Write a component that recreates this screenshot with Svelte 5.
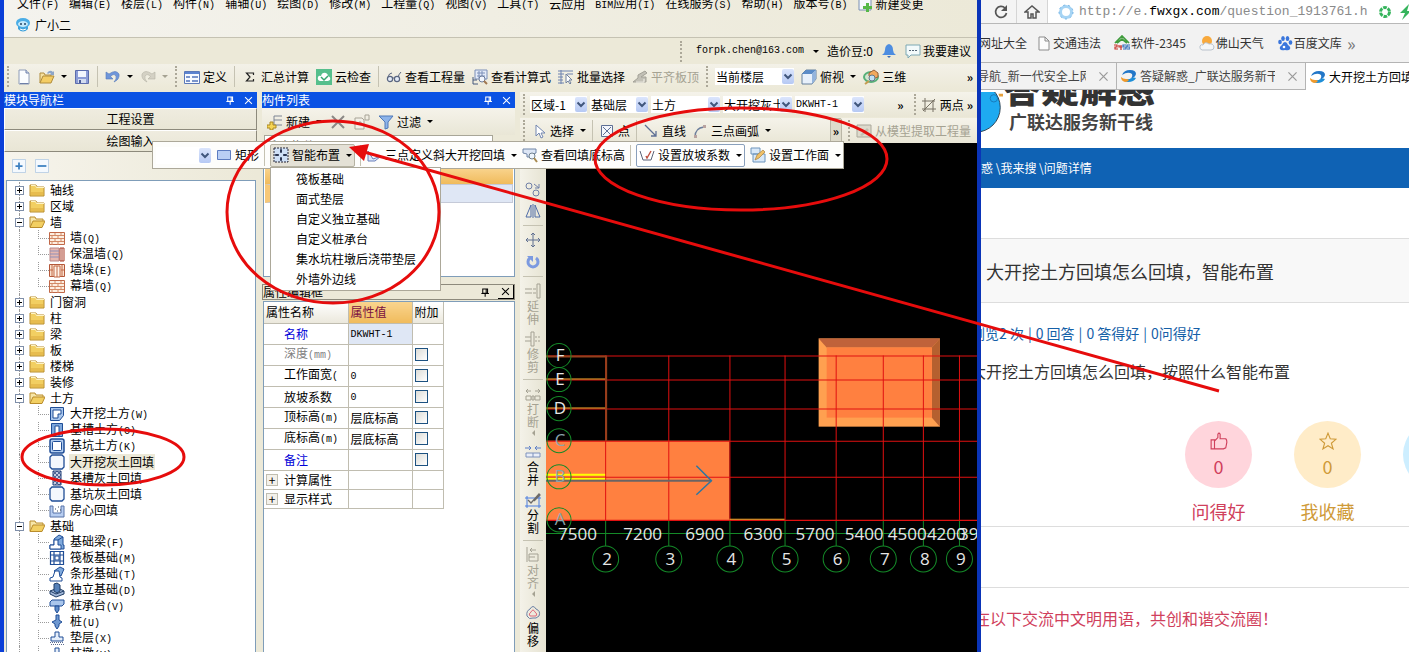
<script>
  const menus = ['文件(F)', '编辑(E)', '楼层(L)', '构件(N)', '辅轴(U)', '绘图(D)', '修改(M)', '工程量(Q)', '视图(V)', '工具(T)', '云应用', 'BIM应用(I)', '在线服务(S)', '帮助(H)', '版本号(B)'];

  const tree = [
    { label: '轴线' },
    { label: '区域' },
    {
      label: '墙',
      children: [['brick', '墙(Q)'], ['insul', '保温墙(Q)'], ['pier', '墙垛(E)'], ['brick', '幕墙(Q)']],
    },
    { label: '门窗洞' },
    { label: '柱' },
    { label: '梁' },
    { label: '板' },
    { label: '楼梯' },
    { label: '装修' },
    {
      label: '土方',
      children: [
        ['dig', '大开挖土方(W)'],
        ['trench', '基槽土方(C)'],
        ['pit', '基坑土方(K)'],
        ['fill', '大开挖灰土回填', true],
        ['hatch', '基槽灰土回填'],
        ['fill', '基坑灰土回填'],
        ['room', '房心回填'],
      ],
    },
    {
      label: '基础',
      children: [
        ['beam', '基础梁(F)'],
        ['raft', '筏板基础(M)'],
        ['strip', '条形基础(T)'],
        ['single', '独立基础(D)'],
        ['cap', '桩承台(V)'],
        ['pile', '桩(U)'],
        ['pad', '垫层(X)'],
        ['pad', '柱墩(Y)'],
      ],
    },
  ];

  const layouts = ['筏板基础', '面式垫层', '自定义独立基础', '自定义桩承台', '集水坑柱墩后浇带垫层', '外墙外边线'];

  const combos = [['区域-1', 57], ['基础层', 58], ['土方', 69], ['大开挖灰土', 69], ['DKWHT-1', 69]];

  const props = [
    { name: '名称', value: 'DKWHT-1', kind: 'key' },
    { name: '深度(mm)', value: '', kind: 'off', check: true },
    { name: '工作面宽(', value: '0', check: true },
    { name: '放坡系数', value: '0', check: true },
    { name: '顶标高(m)', value: '层底标高', check: true },
    { name: '底标高(m)', value: '层底标高', check: true },
    { name: '备注', value: '', kind: 'key', check: true },
  ];

  const edits = [
    { icon: 'copy' },
    { icon: 'mirror', sep: true },
    { icon: 'move' },
    { icon: 'rotate', sep: true },
    { icon: 'extend', label: '延伸', off: true },
    { icon: 'trim', label: '修剪', off: true, sep: true },
    { icon: 'break', label: '打断', off: true, more: true },
    { icon: 'join', label: '合并' },
    { icon: 'split', label: '分割', sep: true },
    { icon: 'align', label: '对齐', off: true, more: true },
    { icon: 'offset', label: '偏移' },
  ];

  // axis grid of the drawing
  const cols = [[59, 2], [122, 3], [183, 4], [238, 5], [289, 6], [336, 7], [376, 8], [412, 9]];
  const rows = [[212, 'F'], [236, 'E'], [265, 'D'], [297, 'C'], [333, 'B'], [376, 'A']];
  const spans = [[12, '7500'], [77, '7200'], [139, '6900'], [197, '6300'], [249, '5700'], [298, '5400'], [341, '4500'], [380, '4200'], [412, '3900']];

  const stats = ['浏览2 次', '|', '0 回答', '|', '0 答得好', '|', '0问得好'];

  const isLatin = (s) => /^[\x20-\x7e]/.test(s);

  const icons = {
    mascot: '<path d="M2 3l3 1h6l3-1-1 4v5q-5 5-10 0V7z" fill="#3fa2dc"/><ellipse cx="8" cy="6" rx="7" ry="5" fill="#4badE6"/><ellipse cx="8" cy="7" rx="5" ry="3" fill="#c3e8fa"/><circle cx="6" cy="7" r="1" fill="#246"/><circle cx="10" cy="7" r="1" fill="#246"/><path d="M5 12q3 2 6 0" fill="none" stroke="#fff"/>',
    page: '<path d="M3 1h7l3 3v11H3z" fill="#fbfdff" stroke="#8e9cb8"/><path d="M10 1v3h3" fill="#d5dff0" stroke="#6d7fa8"/><path d="M4 14.500h8.500" stroke="#6d7fa8"/>',
    open: '<path d="M1 14V4h4l1 2h6v2" fill="#f6e1a0" stroke="#b08c3c"/><path d="M1 14l3-7h11l-3 7z" fill="#f4cd64" stroke="#b08c3c"/><path d="M8 4q3-4 6-1l1-1v4h-4l1-1q-1-2-3 0z" fill="#8ea6c8"/>',
    save: '<path d="M1.500 1.500h13v13h-13z" fill="#8c9cd6" stroke="#5c6cac"/><path d="M4 2h8v6H4z" fill="#f3f6fd"/><path d="M4 10h8v4H4z" fill="#d3dcf0"/><path d="M5 11h2v3H5z" fill="#4c5c98"/>',
    undo: '<path d="M1 3v7h7L5.500 7.500Q9 4 11 7q1 3-2 6 6-3 5-8-3-5-10 0z" fill="#6f96da" stroke="#5478b8" stroke-width=".6"/>',
    redo: '<path d="M15 3v7H8l2.500-2.500Q7 4 5 7q-1 3 2 6-6-3-5-8 3-5 10 0z" fill="#d4d1c4" stroke="#b4b1a4" stroke-width=".6"/>',
    define: '<path d="M.5 2.500h15v12H.5z" fill="#f7faff" stroke="#5b79b8"/><path d="M1 3h14v2H1z" fill="#5b83d0"/><path d="M2 7h4v2H2zM2 11h4v2H2zM8 7h6v2H8zM8 11h6v2H8z" fill="#7a95cc"/>',
    sum: '<path d="M11.500 6V4h-7l3.500 4-3.500 4h7v-2" fill="none" stroke="#222" stroke-width="1.200"/>',
    cloud: '<path d="M0 0h16v16H0z" fill="#56bf8c"/><path d="M4 12q-3-1-2-4 1-2 3-1 1-4 5-3 2 1 2 3 3 1 2 4l-2 1z" fill="#fff"/><path d="M5 8l3 3 4-4" fill="none" stroke="#35a56e" stroke-width="1.500"/>',
    glasses: '<circle cx="4" cy="10" r="2.600" fill="#e5ecf8" stroke="#5a6680" stroke-width="1.200"/><circle cx="11" cy="10" r="2.600" fill="#e5ecf8" stroke="#5a6680" stroke-width="1.200"/><path d="M6 9h3M2 8q1-4 4-4M12 8q1-3 3-5" fill="none" stroke="#5a6680"/>',
    formula: '<path d="M3 1h12v9H3z" fill="#e4ebf8" stroke="#7b8fb8"/><path d="M5 4h8M5 7h8M7 2v7M10 2v7" stroke="#7b8fb8"/><path d="M1 8v7h5M1 11h4" fill="none" stroke="#44587c"/><circle cx="10" cy="10" r="3" fill="#f2f6fd" stroke="#6b7c9c"/><path d="M12 12l3 3" stroke="#a07850" stroke-width="2"/>',
    batch: '<path d="M0 2h15M0 5h6M0 8h5M0 11h5M0 14h6M3 1v14M9 5h6" stroke="#6c82b0"/><path d="M8 5v9l2-2 2 3 1-1-2-3h3z" fill="#fff" stroke="#70809c"/>',
    level: '<path d="M1 13l5-4V6l7-4 2 2-6 4h5v5z" fill="#c2c0b6" stroke="#a3a197"/><path d="M4 13h8v-3" fill="none" stroke="#f4f2ea"/>',
    cube: '<path d="M1 5l4-4h10v9l-4 5H1z" fill="#e7f0fb" stroke="#66809c"/><path d="M1 5l4-4h10l-4 4z" fill="#5b8cc8"/><path d="M11 5l4-4v9l-4 5z" fill="#94b4dc"/>',
    orbit: '<ellipse cx="8" cy="8" rx="7" ry="5" fill="#d5e4d0" stroke="#56b078" stroke-width="2"/><path d="M6 4l5-3 4 3v4l-5 2-4-3z" fill="#f2a95c" stroke="#98603c"/><circle cx="9" cy="9" r="3" fill="#bfe0f5" stroke="#678"/><path d="M6 12l-4 3" stroke="#c59c50" stroke-width="2"/>',
    add: '<path d="M7 2h8M7 6h8M7 11h8M7 2v9" stroke="#7c8494"/><path d="M3 8h3v3h3v3H6v2H3v-2H0v-3h3z" fill="#f6d553" stroke="#a98722"/>',
    del: '<path d="M2 2l12 12M14 2L2 14" stroke="#8b8986" stroke-width="2"/>',
    dup: '<path d="M1 4h7l2 2v9H1z" fill="#f2f0e8" stroke="#a7a396"/><path d="M11 1h4v5h-4zM4 9h4M6 7v4" fill="none" stroke="#a7a396"/>',
    filter: '<path d="M1 2h14l-5 6v6l-3 1V8z" fill="#8db4ea" stroke="#4f78b8"/>',
    pin: '<path d="M4 3h7v6H4zM9 3v6M2 9.500h11M7.500 10v4" fill="none" stroke="currentColor" stroke-width="1.500"/>',
    close: '<path d="M3 3l10 10M13 3L3 13" stroke="currentColor" stroke-width="1.500"/>',
    cursor: '<path d="M5 2v11l3-3 2 5 2-1-2-4h4z" fill="#fff" stroke="#7286b0"/>',
    point: '<path d="M2.500 2.500h11v11h-11z" fill="#f4f6fb" stroke="#5d6f94"/><path d="M4 4l8 8M12 4l-8 8" stroke="#5d6f94"/>',
    line: '<path d="M2 2l11 11M13 8v5H8" fill="none" stroke="#5d6f94" stroke-width="1.300"/>',
    arc: '<path d="M3 14Q3 5 12 4" fill="none" stroke="#6d7f9c" stroke-width="1.300"/><path d="M2 12h3v3H2zM11 2h3v3h-3z" fill="#b9a3a0"/>',
    twop: '<path d="M4 1v14M12 3v12M1 4h13M1 12h14M2 14L14 2" stroke="#777164"/>',
    model: '<path d="M1 2h14v12H1z" fill="#dddacc" stroke="#aaa89b"/><path d="M4 12l7-7 2 2-7 6z" fill="#c3c0b2"/>',
    rect: '<path d="M1.500 3.500h13v9h-13z" fill="#b9cff5" stroke="#5c7cc0"/>',
    smart: '<path d="M1 1h14v14H1z" fill="#cfe0f6" stroke="#223" stroke-dasharray="2 1"/><path d="M8 2v4M8 10v4M2 8h4M10 8h4M7 4h2M7 12h2M4 7v2M12 7v2" fill="none" stroke="#1a2440" stroke-width="1.300"/>',
    slope: '<path d="M2 14V4l5 8 8-3-6 5z" fill="#dce6f8" stroke="#6b80bb"/>',
    lookup: '<path d="M1 2h13v4l-3 1v3H5V7L1 6z" fill="#dde6f5" stroke="#6f85a8"/><circle cx="10" cy="9" r="3" fill="#eef5fd" stroke="#70808c"/><path d="M12 11l3 4" stroke="#a88a50" stroke-width="2"/>',
    factor: '<path d="M1 4l3 9h8l3-9" fill="none" stroke="#5a6378"/><path d="M7 9l1 2 4-7" fill="none" stroke="#c05040" stroke-width="1.400"/>',
    face: '<path d="M1 1h9v6H1zM3 7h12v8H3z" fill="#d8e8f8" stroke="#6c94bc"/><path d="M5 13l2-5 6-5 2 2-6 6z" fill="#f0c168" stroke="#a8803c" stroke-width=".7"/>',
    bell: '<path d="M8 1q4 1 4 6 0 3 3 5H1q3-2 3-5 0-5 4-6z" fill="#4d8de0"/><path d="M6 13h4l-2 2z" fill="#3a6cb8"/>',
    talk: '<path d="M1 2h14v10H6l-3 3v-3H1z" fill="#f3fafb" stroke="#7da8b4"/><path d="M4 7.500h9" stroke="#567" stroke-dasharray="2 1"/>',
    change: '<path d="M2 0h9l3 3v11H2z" fill="#f5f8fd" stroke="#7b90b4"/><path d="M9 7h3v3h3v3h-3v3H9v-3H6v-3h3z" fill="#55b848"/>',
    folder: '<path d="M1 3h6l1 2h7v9H1z" fill="#f2cf62" stroke="#b98c2c"/><path d="M2 3.500h4.500l1 2H15" fill="none" stroke="#fdf3c4"/><path d="M2 10h12v3H2z" fill="#dba93c" opacity=".5"/>',
    folderOpen: '<path d="M1 13V3h5l1 2h7v3" fill="#f7e6a8" stroke="#b98c2c"/><path d="M1 13.500l3-6.500h12l-3 6.500z" fill="#f2cf62" stroke="#b98c2c"/>',
    brick: '<path d="M.5 2.500h15v12H.5z" fill="#fdeee0" stroke="#c06848"/><path d="M1 5.500h14M1 8.500h14M1 11.500h14M6 3v3M12 3v3M3 6v3M9 6v3M6 9v3M12 9v3M3 12v3M9 12v3" stroke="#d38a66"/>',
    insul: '<path d="M1 2h9v13H1z" fill="#e7b8b0" stroke="#b88"/><path d="M1 5h9M1 8h9M1 11h9" stroke="#8f8fb8"/><path d="M11 2h4v13h-4zM13 2v13" fill="#fff" stroke="#a83c28"/>',
    pier: '<path d="M.5 2.500h15v12H.5z" fill="#fbe2d0" stroke="#b4583a"/><path d="M5 4h6v11H5zM3 3v11M8 4v11M13 3v11M1 8h3M12 8h3" fill="#fff4ea" stroke="#c26a48"/>',
    dig: '<path d="M1.500 1.500h13v8l-4 5h-9z" fill="#a9c6ec" stroke="#1f4d96"/><path d="M4 4h8v4H9v4H4z" fill="#fff" stroke="#1f4d96"/>',
    trench: '<path d="M2.500 1.500h11v13h-11z" fill="#7da7dc" stroke="#1f4d96"/><path d="M6 4h4v10H6z" fill="#fff" stroke="#1f4d96"/>',
    pit: '<rect x="1" y="1" width="14" height="14" rx="2" fill="#b2cdf0" stroke="#1f4d96" stroke-width="1.500"/><rect x="3.500" y="3.500" width="9" height="9" rx="1" fill="#fff" stroke="#1f4d96"/>',
    fill: '<path d="M3 1h10l2 2v10l-2 2H3l-2-2V3z" fill="#f3f7fd" stroke="#1f4d96" stroke-width="1.300"/>',
    hatch: '<path d="M4 1h8v14H4z" fill="#c4cbe0" stroke="#1f3d76"/><path d="M4 5l4-4M4 9l8-8M4 13l8-8M6 15l6-6M10 15l2-2M8 1l4 4M4 1l8 8M4 5l8 8M4 9l6 6" stroke="#1f3d76" stroke-width=".7"/>',
    room: '<path d="M1 4h3v7h8V4h3v11H1z" fill="#b7cdf0" stroke="#5673a8"/><path d="M6 7h1M9 5h1M8 9h1M11 8h1" stroke="#345"/>',
    beam: '<path d="M1 15v-4h4V5l5-4 4 2v8h1v4z" fill="#7fa9dc" stroke="#1f4d96"/><path d="M1 15v-4h4V6h4v5h3v4z" fill="#fff" stroke="#1f4d96"/><path d="M9 6l5-3" fill="none" stroke="#1f4d96"/>',
    raft: '<path d="M1.500 1.500h13v13h-13zM1 5h14M1 11h14M5 1v14M11 1v14" fill="#fff" stroke="#1f4d96" stroke-width="1.200"/><path d="M6 6h4v4H6z" fill="#fff" stroke="#1f4d96"/>',
    strip: '<path d="M5 5l6-4 4 2-3 7z" fill="#7fa9dc" stroke="#1f4d96"/><path d="M1 15v-3l3-1 2-6h4l1 6 2 1v3z" fill="#fff" stroke="#1f4d96"/>',
    single: '<path d="M1 9l8-3 6 3v3l-8 3-6-3z" fill="#a3b8d8" stroke="#1f3d66"/><path d="M5 2l3-1 3 2v6l-3 2-3-2z" fill="#5580b8" stroke="#1f3d66"/><path d="M1 9l6 3 8-3" fill="none" stroke="#1f3d66"/>',
    cap: '<path d="M1 4l2-2h12v4l-2 2H1z" fill="#a9c6ec" stroke="#1f4d96"/><path d="M6 8h4v4l-2 3-2-3z" fill="#5f8cc8" stroke="#1f4d96"/>',
    pile: '<path d="M7 1h3v5l3 2-3 2v2l-2 3-2-3v-2L3 8l4-2z" fill="#6f98d0" stroke="#1f4d96"/>',
    pad: '<path d="M6 2h4v5h4v4H2V7h4z" fill="#e5eefa" stroke="#1f4d96"/><path d="M1 12.500h14M2 14.500h13" stroke="#5c6c90" stroke-dasharray="1 1"/>',
    copy: '<circle cx="4" cy="5" r="3" fill="none" stroke="#7080a8"/><circle cx="11" cy="12" r="3" fill="none" stroke="#7080a8"/><path d="M9 3l5 4M14 3v4h-4" fill="none" stroke="#7080a8"/>',
    mirror: '<path d="M6 2v12H1zM10 2v12h5zM8 1v14" fill="none" stroke="#4f6ca8"/>',
    move: '<path d="M8 1v14M1 8h14M6 3l2-2 2 2M6 13l2 2 2-2M3 6L1 8l2 2M13 6l2 2-2 2" fill="none" stroke="#5f6f90"/>',
    rotate: '<path d="M5 4a5 5 0 1 0 6 0" fill="none" stroke="#7c9ae0" stroke-width="3"/><path d="M2 2h6v6z" fill="#7c9ae0"/>',
    extend: '<path d="M0 6h7M0 10h7M8 6h3M8 10h3" stroke="#a4a193"/><path d="M12 1h3v14h-3z" fill="none" stroke="#a4a193"/>',
    trim: '<path d="M6 1h3v14H6zM0 6h6M0 10h6M10 6h2M13 6h2M10 10h2M13 10h2" fill="none" stroke="#a4a193"/>',
    break: '<path d="M1 5h5M10 5h5M3 3L1 5l2 2M13 3l2 2-2 2M1 10h5v4H1zM7 10h2v4H7zM10 10h5v4h-5z" fill="none" stroke="#a4a193"/>',
    join: '<path d="M0 4h6M10 4h6M4 2l2 2-2 2M12 2l-2 2 2 2" fill="none" stroke="#5c7fc8"/><path d="M1 9h14v4H1zM8 9v4" fill="#e9eef8" stroke="#7f92bc"/>',
    split: '<path d="M0 6h16M0 14h16M2 4v12M14 4v12" stroke="#4b7ce0"/><path d="M3 8l3 3 8-9 1 1-6 6" fill="none" stroke="#6c6a68" stroke-width="1.300"/>',
    align: '<path d="M2 0v15M5 3h6M5 3l2-2M5 3l2 2M4 7h9v7H4zM4 10h6" fill="none" stroke="#a4a193"/>',
    offset: '<path d="M5 4q3-5 6 0 5 2 3 7-3 3-6 2-4 2-6-2-1-5 3-7z" fill="none" stroke="#6c80a4"/><path d="M6 7q2-4 4 0 3 2 1 4H5q-2-2 1-4z" fill="none" stroke="#e06a7a"/>',
    plus: '<path d="M.5.5h15v15H.5z" fill="#f4f9fe" stroke="#b5cbe4"/><path d="M8 4v8M4 8h8" stroke="#3b7fc0" stroke-width="2"/>',
    minus: '<path d="M.5.5h15v15H.5z" fill="#f4f9fe" stroke="#b5cbe4"/><path d="M3 8h10" stroke="#3b7fc0" stroke-width="2"/>',
    reload: '<path d="M12 4a5.500 5.500 0 1 0 1.500 5" fill="none" stroke="#555" stroke-width="1.700"/><path d="M14 1v6H8z" fill="#555"/>',
    home: '<path d="M1 8l7-6 7 6h-3v6H9v-4H7v4H4V8z" fill="none" stroke="#555" stroke-width="1.500"/>',
    site: '<circle cx="8" cy="8" r="5.500" fill="none" stroke="#a6d4f4" stroke-width="3"/><circle cx="8" cy="8" r="7" fill="none" stroke="#6fb2e6" stroke-dasharray="2 3"/>',
    aperture: '<circle cx="8" cy="8" r="4.500" fill="none" stroke="#35b45c" stroke-width="3" stroke-dasharray="3.700 1"/>',
    bolt: '<path d="M11 0L2 9h5l-3 7 9-9H9z" fill="#35b45c"/>',
    file: '<path d="M3 2h6l4 4v9H3zM9 2v4h4" fill="#fcfcfc" stroke="#8c8c8c"/>',
    house: '<path d="M1 8l7-7 7 7M3 8V6M13 8l-5-4-5 4" fill="none" stroke="#3f9c3c" stroke-width="1.700"/><path d="M0 10h3v2H1v2h3M5 10v2h3M7 10v5" fill="none" stroke="#c8342c" stroke-width="1.200"/><path d="M12 10H9v2h3v2H9M16 10h-3v2h3v2h-3" fill="none" stroke="#2f6cb8" stroke-width="1.200"/>',
    weather: '<circle cx="8" cy="6" r="5" fill="#f8a93c"/><path d="M3 15q-3-1-2-4 1-2 3-1 2-4 6-1 4-1 5 3 0 3-3 3z" fill="#f4f6f8" stroke="#b9c2cc"/>',
    paw: '<ellipse cx="3" cy="7" rx="1.800" ry="2.300" fill="#3a76dc"/><ellipse cx="6" cy="3.500" rx="1.800" ry="2.500" fill="#3a76dc"/><ellipse cx="10.500" cy="3.500" rx="1.800" ry="2.500" fill="#3a76dc"/><ellipse cx="13.500" cy="7.500" rx="1.800" ry="2.300" fill="#3a76dc"/><path d="M8 7q2 0 3 3 3 2 2 4-1 2-5 1-4 1-5-1-1-2 2-4 1-3 3-3z" fill="#3a76dc"/><circle cx="7" cy="12" r="1.300" fill="#fff"/>',
    swirl: '<path d="M1 7Q3 2 9 2q6 0 6 4-1 4-6 5 3-2 2-5Q7 3 1 7z" fill="#2377c8"/><path d="M15 10q-2 4-8 4-4 0-5-3 6 1 9-1 2-1 4 0z" fill="#1f8fd8"/><path d="M0 9q2 2 5 2 2 0 3 1-1 2-4 2-4-1-4-5z" fill="#f09a2c"/>',
    thumb: '<path d="M1 7h3v8H1zM4 8l3-3V2q1-2 2 0v4h5q1 1 1 3l-1 5-2 1H4" fill="none" stroke="currentColor"/>',
    star: '<path d="M8 1l2 5 5 .5-4 3.500 1.500 5L8 12.200 3.500 15 5 10 1 6.500 6 6z" fill="none" stroke="currentColor"/>',
  };
</script>

{#snippet icon(name)}
  <svg class="icon" viewBox="0 0 16 16" aria-hidden="true">{@html icons[name]}</svg>
{/snippet}

{#snippet text(s)}
  {#each s.split(/([\x20-\x7e]+)/).filter(Boolean) as part}{#if isLatin(part)}<span class="latin">{part}</span>{:else}{part}{/if}{/each}
{/snippet}

{#snippet tool(name, label, more = false, off = false)}
  <button type="button" class="tool" class:off>
    {@render icon(name)}
    {#if label}<span>{label}</span>{/if}
    {#if more}<i class="caret"></i>{/if}
  </button>
{/snippet}

{#snippet combo(value, label)}
  <span class="combo">
    <select aria-label={label} class:latin={isLatin(value)}><option>{value}</option></select>
    <svg class="arrow" viewBox="0 0 12 15" aria-hidden="true"><path d="M2.500 5.500L6 9l3.500-3.500" /></svg>
  </span>
{/snippet}

<div class="desktop">
  <section class="cad">
    <header>
      <nav class="menubar">
        <div class="menus">
          {#each menus as m}
            <button type="button">{@render text(m)}</button>
          {/each}
          <button type="button" class="with-icon">{@render icon('change')}新建变更</button>
        </div>
        <button type="button" class="with-icon helper">{@render icon('mascot')}广小二</button>
      </nav>

      <div class="account">
        <i class="grip"></i>
        <button type="button" class="mail">{@render text('forpk.chen@163.com')}<i class="caret"></i></button>
        <span>造价豆:0</span>
        <button type="button" class="with-icon" aria-label="消息">{@render icon('bell')}</button>
        <button type="button" class="with-icon">{@render icon('talk')}我要建议</button>
      </div>

      <div class="toolbar main-tools">
        <i class="grip"></i>
        {@render tool('page')}
        {@render tool('open', '', true)}
        {@render tool('save')}
        <i class="sep"></i>
        {@render tool('undo', '', true)}
        {@render tool('redo', '', true, true)}
        <i class="grip"></i>
        {@render tool('define', '定义')}
        <i class="sep"></i>
        {@render tool('sum', '汇总计算')}
        {@render tool('cloud', '云检查')}
        <i class="sep"></i>
        {@render tool('glasses', '查看工程量')}
        {@render tool('formula', '查看计算式')}
        {@render tool('batch', '批量选择')}
        {@render tool('level', '平齐板顶', false, true)}
        <i class="grip"></i>
        <div class="floor">{@render combo('当前楼层', '楼层范围')}</div>
        {@render tool('cube', '俯视', true)}
        {@render tool('orbit', '三维')}
        <span class="overflow">»</span>
      </div>
    </header>

    <div class="work">
      <aside class="nav">
        <h2 class="title">模块导航栏 <span class="title-icons">{@render icon('pin')}{@render icon('close')}</span></h2>
        <button type="button" class="section">工程设置</button>
        <button type="button" class="section">绘图输入</button>
        <div class="expand">
          <button type="button" aria-label="展开">{@render icon('plus')}</button>
          <button type="button" aria-label="折叠">{@render icon('minus')}</button>
        </div>
        <ul class="tree">
          {#each tree as node}
            <li>
              <div class="node">
                <span class="toggle" class:open={node.children}></span>
                {@render icon(node.children ? 'folderOpen' : 'folder')}
                <span>{node.label}</span>
              </div>
              {#if node.children}
                <ul>
                  {#each node.children as [name, label, selected]}
                    <li class="leaf">
                      {@render icon(name)}
                      <span class="leaf-label" class:selected>{@render text(label)}</span>
                    </li>
                  {/each}
                </ul>
              {/if}
            </li>
          {/each}
        </ul>
      </aside>

      <aside class="parts">
        <h2 class="title">构件列表 <span class="title-icons">{@render icon('pin')}{@render icon('close')}</span></h2>
        <div class="toolbar list-tools">
          {@render tool('add', '新建', true)}
          {@render tool('del')}
          {@render tool('dup')}
          {@render tool('filter', '过滤', true)}
        </div>
        <input class="search" type="text" placeholder="搜索构件..." aria-label="搜索构件" />
        <div class="list">
          <div class="list-head"></div>
          <div class="list-row"></div>
        </div>
        <h2 class="prop-title">属性编辑框 <span class="title-icons">{@render icon('pin')}<button type="button" aria-label="关闭">{@render icon('close')}</button></span></h2>
        <div class="props">
          <table>
            <thead>
              <tr><th class="c-name">属性名称</th><th class="c-value">属性值</th><th class="c-check">附加</th></tr>
            </thead>
            <tbody>
              {#each props as p, i}
                <tr>
                  <td class="name {p.kind ?? ''}">{@render text(p.name)}</td>
                  <td class:current={i === 0}>{@render text(p.value)}</td>
                  <td class="check">{#if p.check}<input type="checkbox" aria-label={p.name} />{/if}</td>
                </tr>
              {/each}
              {#each ['计算属性', '显示样式'] as g}
                <tr class="group">
                  <td><span class="group-label"><span class="box">+</span>{g}</span></td>
                  <td></td>
                  <td></td>
                </tr>
              {/each}
            </tbody>
          </table>
        </div>
      </aside>

      <main class="drawing">
        <div class="toolbar pick-tools">
          <i class="grip"></i>
          {#each combos as [value, width]}
            <div style="width: {width}px">{@render combo(value, value)}</div>
          {/each}
          <span class="overflow">»</span>
          <i class="grip"></i>
          {@render tool('twop', '两点')}
          <b>»</b>
        </div>
        <div class="toolbar draw-tools">
          <i class="grip"></i>
          {@render tool('cursor', '选择', true)}
          <i class="sep"></i>
          {@render tool('point', '点')}
          <i class="sep"></i>
          {@render tool('line', '直线')}
          {@render tool('arc', '三点画弧', true)}
          <button type="button" class="expander overflow">»</button>
          <i class="grip"></i>
          {@render tool('model', '从模型提取工程量', false, true)}
        </div>
        <div class="stage">
          <div class="edits">
            {#each edits as e}
              <button type="button" class="edit" class:off={e.off}>
                {@render icon(e.icon)}
                {#if e.label}<span>{e.label}</span>{/if}
                {#if e.more}<i class="caret-left"></i>{/if}
              </button>
              {#if e.sep}<i class="rule"></i>{/if}
            {/each}
          </div>
          <svg class="canvas" viewBox="0 0 430 509" preserveAspectRatio="xMinYMin slice">
            <rect x="0" y="297" width="183" height="80" fill="#ff8040" />
            <!-- backfill pit with bevelled edges -->
            <rect x="272" y="195" width="121" height="88" fill="#ffa050" />
            <path d="M272 195h121l-8 9H280z" fill="#c0623a" />
            <path d="M385 204l8-9v88l-8-9z" fill="#b5602f" />
            <rect x="280" y="204" width="105" height="70" fill="#ff8040" />
            <g class="axis">
              {#each rows as [y]}
                <path d="M0 {y + 0.5}H430" />
              {/each}
              {#each cols as [x]}
                <path d="M{x + 0.5} 212V377" />
              {/each}
            </g>
            <path d="M0 213H60V297" fill="none" stroke="#94401c" stroke-width="2" />
            <path d="M0 235.500H59M0 264.500H59M183 375.500H238" stroke="#ffb030" />
            <path d="M0 331H59M0 335H59" stroke="#ffff00" stroke-width="2" />
            <path d="M0 337H165" fill="none" stroke="#6a6464" stroke-width="2" />
            <path d="M150 322l15 15-15 14" fill="none" stroke="#2f76a0" stroke-width="1.500" />
            <g class="bubble">
              <path d="M0 389.500H430" />
              {#each cols as [x]}
                <path d="M{x + 0.5} 377V402" />
                <circle cx={x + 0.5} cy="415" r="13" />
              {/each}
              {#each rows as [y]}
                <circle cx="13" cy={y} r="12" />
              {/each}
            </g>
            {#each cols as [x, n]}
              <text x={x + 2} y="421" text-anchor="middle">{n}</text>
            {/each}
            {#each rows as [y, n]}
              <text x="14" y={y + 5} text-anchor="middle" class:under={y > 290}>{n}</text>
            {/each}
            {#each spans as [x, n]}
              <text {x} y="396">{n}</text>
            {/each}
          </svg>
        </div>
      </main>
    </div>

    <div class="floating">
      <div class="shape">{@render combo('', '图元')}</div>
      {@render tool('rect', '矩形')}
      <i class="sep"></i>
      <div class="smart">
        {@render tool('smart', '智能布置', true)}
        <ul class="dropdown">
          {#each layouts as l}
            <li><button type="button">{l}</button></li>
          {/each}
        </ul>
      </div>
      <i class="sep"></i>
      {@render tool('slope', '三点定义斜大开挖回填', true)}
      {@render tool('lookup', '查看回填底标高')}
      <i class="sep"></i>
      <div class="framed">{@render tool('factor', '设置放坡系数', true)}</div>
      {@render tool('face', '设置工作面', true)}
    </div>
  </section>

  <section class="browser">
    <div class="address">
      <button type="button" aria-label="刷新">{@render icon('reload')}</button>
      <button type="button" aria-label="主页">{@render icon('home')}</button>
      <div class="url">
        {@render icon('site')}
        <span>http://e.<b>fwxgx.com</b>/question_1913761.h</span>
        {@render icon('aperture')}
        {@render icon('bolt')}
      </div>
    </div>
    <div class="bookmarks">
      <a href="#daquan">网址大全</a>
      <a href="#jiaotong">{@render icon('file')}交通违法</a>
      <a href="#soft">{@render icon('house')}软件-2345</a>
      <a href="#weather">{@render icon('weather')}佛山天气</a>
      <a href="#wenku">{@render icon('paw')}百度文库</a>
      <span class="more">»</span>
    </div>
    <div class="tabs">
      <div class="tab first"><span>导航_新一代安全上网导</span>{@render icon('close')}</div>
      <div class="tab second">{@render icon('swirl')}<span>答疑解惑_广联达服务新干</span>{@render icon('close')}</div>
      <div class="tab active">{@render icon('swirl')}<span>大开挖土方回填</span></div>
    </div>
    <div class="page">
      <div class="brand">
        <svg class="globe" viewBox="0 0 24 42" aria-hidden="true">
          <circle cx="-6" cy="15" r="27" fill="#1eaaf1" stroke="#2b3c4c" />
          <circle cx="14" cy="5" r="4" fill="none" stroke="#1878b8" />
          <path d="M19 0h5v3h-4z" fill="#e8a13c" />
        </svg>
        <div class="brand-text">
          <strong>答疑解惑</strong>
          <span>广联达服务新干线</span>
        </div>
      </div>
      <div class="crumbs"><span>惑 \我来搜 \问题详情</span></div>
      <h1>大开挖土方回填怎么回填，智能布置</h1>
      <p class="meta">
        {#each stats as s}
          <span>{s}</span>
        {/each}
      </p>
      <p class="question">大开挖土方回填怎么回填，按照什么智能布置</p>
      <div class="votes">
        <button type="button" class="vote pink"><span class="disc">{@render icon('thumb')}0</span>问得好</button>
        <button type="button" class="vote gold"><span class="disc">{@render icon('star')}0</span>我收藏</button>
        <button type="button" class="vote blue" aria-label="分享"><span class="disc"></span></button>
      </div>
      <p class="notice">在以下交流中文明用语，共创和谐交流圈！</p>
    </div>
  </section>

  <!-- red pen marks over both windows -->
  <svg class="marks" width="1409" height="652" viewBox="0 0 1409 652" aria-hidden="true">
    <ellipse cx="333" cy="212" rx="106" ry="91" />
    <ellipse cx="741" cy="159" rx="146" ry="51" />
    <ellipse cx="103" cy="457" rx="81" ry="28" />
    <path d="M1219 391L364 152" />
    <path class="head" d="M349 147l20-3-5 17z" />
  </svg>
</div>

<style>
  :global(body) {
    margin: 0;
    overflow: hidden;
  }

  .desktop {
    position: relative;
    display: flex;
    height: 100vh;
    overflow: hidden;
    font: 12px/16px "Noto Sans CJK SC", sans-serif;
    color: #000;
  }

  .desktop :global(*) {
    box-sizing: border-box;
  }

  button,
  select,
  input {
    font: inherit;
    color: inherit;
  }

  button {
    padding: 0;
    border: 0;
    background: none;
    white-space: nowrap;
  }

  ul,
  h1,
  h2,
  p {
    margin: 0;
    padding: 0;
    list-style: none;
    font-weight: normal;
  }

  .icon {
    flex: none;
    width: 16px;
    height: 16px;
    display: block;
  }

  .latin {
    font-family: "Liberation Mono", monospace;
    font-size: 10px;
  }

  .caret {
    width: 0;
    border: 3px solid transparent;
    border-top-color: currentColor;
    border-bottom: 0;
    margin-left: 3px;
  }

  .grip {
    flex: none;
    height: 21px;
    border-left: 2px dotted #aca899;
    margin: 0 2px 0 3px;
  }

  .sep {
    flex: none;
    width: 1px;
    height: 21px;
    background: #c5c2b2;
  }

  /* CAD window */
  .cad {
    position: relative;
    flex: 973 1 0;
    min-width: 0;
    display: flex;
    flex-direction: column;
    border: 4px solid #0a3fd8;
    border-width: 0 4px;
    border-right-color: #0a34b8;
    background: #ece9d8;
  }

  .menubar {
    margin-top: -4px;
    padding: 0 0 4px 13px;
    border-bottom: 1px solid #c5c2b2;
    background: linear-gradient(90deg, #f4f3ee, #ece9d8);
  }

  .menus {
    display: flex;
    align-items: center;
    gap: 10px;
    height: 16px;
  }

  .with-icon {
    display: flex;
    align-items: center;
    gap: 2px;
    height: 16px;
  }

  .helper {
    margin: 5px 0 0 -2px;
    gap: 4px;
  }

  .account {
    display: flex;
    align-items: center;
    justify-content: flex-end;
    gap: 8px;
    height: 26px;
    padding-right: 6px;
  }

  .mail {
    display: flex;
    align-items: center;
    gap: 6px;
    padding-left: 4px;
  }

  .toolbar {
    display: flex;
    align-items: center;
    gap: 8px;
    height: 25px;
    overflow: hidden;
    white-space: nowrap;
    background: linear-gradient(#f5f3ea, #e9e6d6);
  }

  .main-tools {
    gap: 7px;
    margin-bottom: 3px;
    background: linear-gradient(#f3f1e8, #ece9d8);
  }

  .main-tools .grip {
    margin: 0;
  }

  .main-tools .grip:first-child {
    margin-left: 3px;
  }

  .tool {
    flex: none;
    display: flex;
    align-items: center;
    gap: 3px;
    color: #000;
  }

  .off {
    color: #a5a292;
  }

  .floor {
    width: 79px;
  }

  .overflow {
    margin-left: auto;
    margin-right: 4px;
    font-weight: bold;
  }

  .combo {
    display: flex;
    align-items: center;
    height: 17px;
    background: #fff;
  }

  .combo select {
    flex: 1;
    min-width: 0;
    height: 17px;
    padding: 0 0 0 1px;
    border: 0;
    background: none;
    appearance: none;
    overflow: hidden;
    line-height: 17px;
    text-overflow: clip;
  }

  .combo .latin {
    font-family: "Liberation Mono", monospace;
    font-size: 10px;
  }

  .arrow {
    flex: none;
    width: 12px;
    height: 15px;
    border-radius: 2px;
    background: linear-gradient(#dbe5fc, #b6c9f4);
  }

  .arrow path {
    fill: none;
    stroke: #40567c;
    stroke-width: 2;
  }

  .work {
    flex: 1;
    min-height: 0;
    display: flex;
    gap: 5px;
  }

  .nav,
  .parts {
    flex: 0 0 253px;
    display: flex;
    flex-direction: column;
    min-height: 0;
  }

  .title {
    flex: none;
    display: flex;
    justify-content: space-between;
    align-items: center;
    height: 16px;
    font-size: 12px;
    line-height: 16px;
    color: #fff;
    background: #0a52e4;
  }

  .title-icons {
    display: flex;
    align-items: center;
    gap: 7px;
    padding-right: 3px;
  }

  .title-icons .icon {
    width: 11px;
    height: 11px;
  }

  .section {
    flex: none;
    height: 22px;
    border: 1px solid;
    border-color: #fff #8d8a7c #8d8a7c #fff;
    background: linear-gradient(#efecdf, #e9e6d5);
  }

  .expand {
    flex: none;
    display: flex;
    align-items: center;
    gap: 9px;
    height: 28px;
    padding-left: 8px;
    background: linear-gradient(90deg, #f6f4ec, #ece9d8);
  }

  .expand .icon {
    width: 14px;
    height: 14px;
  }

  .tree {
    flex: 1;
    margin: 0 1px 0 2px;
    padding-top: 1px;
    min-height: 0;
    overflow: hidden;
    border: 1px solid #7f9db9;
    border-bottom: 0;
    background: #fff;
  }

  .node,
  .leaf {
    position: relative;
    display: flex;
    align-items: center;
    gap: 5px;
    height: 16px;
    padding-left: 8px;
  }

  .leaf {
    padding-left: 42px;
    gap: 4px;
  }

  .node::before,
  .leaf::before {
    content: "";
    position: absolute;
    left: 12px;
    top: 0;
    height: 16px;
    border-left: 1px dotted #9a9a9a;
  }

  .leaf::after {
    content: "";
    position: absolute;
    left: 31px;
    top: 0;
    width: 10px;
    height: 8px;
    border: 1px dotted #9a9a9a;
    border-width: 0 0 1px 1px;
  }

  .toggle {
    position: relative;
    flex: none;
    width: 9px;
    height: 9px;
    border: 1px solid #7f8fa9;
    background:
      linear-gradient(#000, #000) center / 5px 1px no-repeat,
      linear-gradient(#000, #000) center / 1px 5px no-repeat,
      #fff;
  }

  .toggle.open {
    background: linear-gradient(#000, #000) center / 5px 1px no-repeat, #fff;
  }

  .leaf-label {
    white-space: nowrap;
    padding: 0 1px;
  }

  .selected {
    background: #ece9d8;
  }

  .list-tools {
    flex: none;
    height: 27px;
    padding-left: 5px;
  }

  .search {
    flex: none;
    width: 229px;
    height: 20px;
    margin: 0 0 12px 2px;
    padding: 0 2px;
    border: 1px solid #a8a698;
    background: #fff;
  }

  .list {
    flex: none;
    height: 110px;
    margin-left: 1px;
    padding: 0 1px;
    border: 1px solid #7f9db9;
    background: #fff;
  }

  .list-head {
    height: 16px;
    background: linear-gradient(#f9d48e, #f0bb5c);
  }

  .list-row {
    height: 19px;
    border: 1px solid #c5cad8;
    border-left: 5px solid #f7c877;
    background: #dfe7f5;
  }

  .prop-title {
    flex: none;
    display: flex;
    justify-content: space-between;
    align-items: center;
    height: 16px;
    margin: 7px 0 1px;
    border: 1px solid #8d8a7c;
    font-size: 12px;
    line-height: 14px;
  }

  .prop-title .title-icons {
    padding: 0;
  }

  .prop-title button {
    display: grid;
    place-items: center;
    width: 16px;
    height: 14px;
    border: 1px solid #000;
    border-width: 0 1px 1px 0;
  }

  .props {
    flex: 1;
    min-height: 0;
    margin-left: 1px;
    border: 1px solid #7f9db9;
    border-bottom: 0;
    background: #fff;
  }

  table {
    border-collapse: collapse;
    table-layout: fixed;
    width: 179px;
    line-height: 16px;
  }

  th,
  td {
    height: 21px;
    padding: 0 2px;
    border: 1px solid #c0bdb0;
    border-width: 0 1px 1px 0;
    font-weight: normal;
    text-align: left;
    white-space: nowrap;
    overflow: hidden;
  }

  th {
    background: linear-gradient(#fff, #ebe8dc);
  }

  .c-name {
    width: 84px;
  }

  .c-value {
    width: 64px;
    color: #7a1040;
    background: linear-gradient(#f9d48e, #f0bb5c);
  }

  .c-check {
    width: 31px;
  }

  .name {
    padding-left: 20px;
  }

  .key {
    color: #0000d8;
  }

  .name.off {
    color: #808080;
  }

  .current {
    background: #dfe7f5;
  }

  .check input {
    display: block;
    width: 13px;
    height: 13px;
    margin: 0;
    border: 1px solid #1c5180;
    background: linear-gradient(135deg, #dcdcd7, #fff);
    appearance: none;
  }

  .group td {
    height: 19px;
  }

  .group-label {
    display: flex;
    align-items: center;
    gap: 6px;
  }

  .box {
    width: 12px;
    height: 12px;
    border: 1px solid #c0bdb0;
    background: #f3f1ea;
    line-height: 9px;
    text-align: center;
  }

  .drawing {
    flex: 1;
    min-width: 0;
    display: flex;
    flex-direction: column;
  }

  .pick-tools {
    gap: 3px;
    flex: none;
    margin-bottom: 1px;
    padding-right: 4px;
  }

  .draw-tools {
    flex: none;
    gap: 6px;
    padding-right: 6px;
  }

  .draw-tools .grip {
    margin-right: 0;
  }

  .expander {
    align-self: stretch;
    width: 12px;
    margin-right: -3px;
    border: 1px solid #b9b6a6;
    border-radius: 2px;
    background: #dedbcb;
  }

  .stage {
    flex: 1;
    min-height: 0;
    display: flex;
  }

  .edits {
    flex: 0 0 26px;
    display: flex;
    flex-direction: column;
    align-items: center;
    gap: 6px;
    padding-top: 38px;
    overflow: hidden;
    background: linear-gradient(90deg, #f4f2e9, #e6e3d2);
  }

  .edit {
    flex: none;
    display: flex;
    flex-direction: column;
    align-items: center;
  }

  .edit span {
    width: 12px;
    line-height: 13px;
    white-space: normal;
  }

  .caret-left {
    margin: 2px;
    border: 3px solid transparent;
    border-right-color: currentColor;
    border-left: 0;
  }

  .rule {
    flex: none;
    width: 20px;
    height: 1px;
    background: #c5c2b2;
  }

  .canvas {
    flex: 1;
    min-width: 0;
    height: 100%;
    background: #000;
  }

  .axis path {
    stroke: #e01010;
  }

  .bubble {
    fill: none;
    stroke: #148a28;
  }

  .canvas text {
    fill: #e6e6e6;
    font: 17px "Open Sans", sans-serif;
  }

  .canvas .under {
    fill: #8aa4ac;
  }

  .floating {
    position: absolute;
    left: 148px;
    top: 141px;
    display: flex;
    align-items: center;
    gap: 5px;
    height: 28px;
    padding: 0 2px 0 3px;
    border: 1px solid #aca899;
    background: #fdfdfb;
  }

  .shape {
    width: 55px;
  }

  .smart {
    position: relative;
  }

  .smart :global(> .tool),
  .framed :global(> .tool) {
    height: 23px;
    padding: 0 2px;
    border: 1px solid #b5b2a2;
    border-radius: 2px;
    background: #e4e1d6;
  }

  .framed :global(> .tool) {
    border-color: #8aa0bc;
    background: #fff;
  }

  .dropdown {
    position: absolute;
    left: 0;
    top: 100%;
    width: 171px;
    padding: 1px 0;
    border: 1px solid #aca899;
    background: #fff;
  }

  .dropdown button {
    display: block;
    width: 100%;
    height: 20px;
    padding-left: 25px;
    text-align: left;
  }

  /* browser window */
  .browser {
    flex: 428 1 0;
    min-width: 0;
    overflow: hidden;
    background: #fff;
  }

  .address {
    display: flex;
    height: 24px;
    border-bottom: 1px solid #b8b8b8;
    background: #f4f4f4;
  }

  .address > button {
    display: grid;
    place-items: center;
    width: 31px;
    border-right: 1px solid #d5d5d5;
  }

  .address > button:first-child {
    width: 36px;
    padding-left: 5px;
  }

  .url {
    flex: 1;
    min-width: 0;
    display: flex;
    align-items: center;
    gap: 5px;
    overflow: hidden;
    padding-left: 10px;
    background: #fff;
    font: 13px/20px "Liberation Mono", monospace;
    color: #8a8a8a;
  }

  .url span {
    margin-right: 4px;
  }

  .url b {
    font-weight: normal;
    color: #000;
  }

  .bookmarks {
    display: flex;
    align-items: center;
    gap: 9px;
    height: 38px;
    white-space: nowrap;
    background: #f2f2f2;
  }

  .bookmarks a {
    display: flex;
    align-items: center;
    gap: 1px;
    color: #333;
    text-decoration: none;
  }

  .bookmarks a:nth-child(n + 3) {
    margin-left: 4px;
  }

  .bookmarks a:first-child {
    margin-left: -2px;
  }

  .more {
    margin-left: -4px;
    font-size: 18px;
    color: #777;
  }

  .tabs {
    display: flex;
    height: 28px;
    overflow: hidden;
    background: #e6e6e6;
  }

  .tab {
    flex: none;
    display: flex;
    align-items: center;
    gap: 3px;
    padding: 0 4px;
    border: 1px solid #b4b4b4;
    border-left: 0;
    background: #f2f2f2;
    color: #444;
    white-space: nowrap;
  }

  .tab span {
    flex: 1;
    overflow: hidden;
  }

  .first {
    width: 136px;
    padding-left: 0;
    text-indent: -4px;
  }

  .second {
    width: 189px;
  }

  .first .icon:last-child,
  .second .icon:last-child {
    width: 13px;
    height: 13px;
    margin: 0 2px 0 8px;
    color: #999;
  }

  .active {
    flex: 1;
    border-bottom: 0;
    background: #fff;
    color: #000;
  }

  .brand {
    display: flex;
    height: 58px;
    overflow: hidden;
  }

  .globe {
    flex: none;
    width: 22px;
    height: 42px;
    margin-top: 2px;
  }

  .brand-text {
    display: flex;
    flex-direction: column;
    gap: 7px;
    margin-top: -23px;
    color: #333;
    font-weight: bold;
    white-space: nowrap;
  }

  .brand-text strong {
    font-size: 38px;
    line-height: 38px;
  }

  .brand-text span {
    padding-left: 6px;
    font-size: 18px;
    line-height: 18px;
    color: #444;
  }

  .crumbs {
    display: flex;
    align-items: center;
    height: 40px;
    background: #0f62b4;
    color: #fff;
  }

  h1 {
    margin-top: 50px;
    padding: 20px 5px 19px;
    border: 1px solid #ddd;
    border-width: 1px 0;
    background: #f8f8f8;
    font-size: 18px;
    line-height: 24px;
    color: #333;
    white-space: nowrap;
  }

  .meta {
    display: flex;
    gap: 4px;
    margin: 20px 0 0 -10px;
    font-size: 14px;
    line-height: 20px;
    color: #1560a8;
    white-space: nowrap;
  }

  .question {
    margin: 16px 0 0 -11px;
    font-size: 16px;
    line-height: 24px;
    color: #333;
    white-space: nowrap;
  }

  .votes {
    display: flex;
    gap: 42px;
    height: 144px;
    padding: 38px 0 0 204px;
    border-bottom: 1px solid #ddd;
    overflow: hidden;
  }

  .vote {
    flex: none;
    display: flex;
    flex-direction: column;
    align-items: center;
    gap: 11px;
    font-size: 18px;
    line-height: 24px;
  }

  .disc {
    display: flex;
    flex-direction: column;
    align-items: center;
    justify-content: center;
    gap: 4px;
    width: 67px;
    height: 67px;
    border-radius: 50%;
  }

  .disc .icon {
    width: 18px;
    height: 18px;
  }

  .pink {
    color: #d0405c;
  }

  .pink .disc {
    background: #ffd5dc;
  }

  .gold {
    color: #cf9a38;
  }

  .gold .disc {
    background: #ffecc8;
  }

  .blue .disc {
    background: #cdeeff;
  }

  .notice {
    margin-top: 60px;
    padding: 18px 0;
    border-top: 1px solid #ddd;
    font-size: 16px;
    line-height: 24px;
    color: #d0405c;
    text-indent: -7px;
    white-space: nowrap;
  }

  .marks {
    position: absolute;
    left: 0;
    top: 0;
    pointer-events: none;
    fill: none;
    stroke: #e60c0c;
    stroke-width: 3;
  }

  .head {
    fill: #e60c0c;
    stroke: none;
  }
</style>
